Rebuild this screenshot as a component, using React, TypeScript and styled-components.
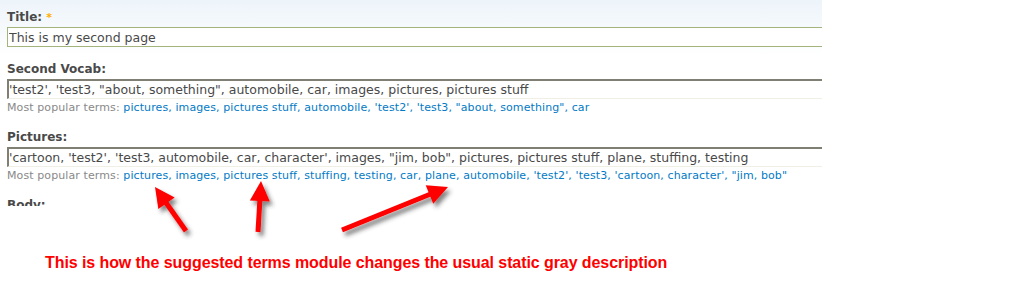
import React from 'react';
import styled, { createGlobalStyle } from 'styled-components';

const GlobalStyle = createGlobalStyle`
  body {
    margin: 0;
    background: #ffffff;
  }
`;

const LINK_COLOR = '#027ac6';
const TEXT_COLOR = '#494949';
const MUTED_COLOR = '#898989';

const vocabTerms = [
  'pictures',
  'images',
  'pictures stuff',
  'automobile',
  "'test2'",
  "'test3",
  '"about, something"',
  'car',
];

const pictureTerms = [
  'pictures',
  'images',
  'pictures stuff',
  'stuffing',
  'testing',
  'car',
  'plane',
  'automobile',
  "'test2'",
  "'test3",
  "'cartoon, character'",
  '"jim, bob"',
];

// arrows drawn over the form: tail x/y, tip x/y
const arrows = [
  { x1: 186, y1: 231, x2: 155, y2: 187 },
  { x1: 258, y1: 232, x2: 261, y2: 181 },
  { x1: 342, y1: 230, x2: 448, y2: 187 },
];

function Arrow({ x1, y1, x2, y2 }: { x1: number; y1: number; x2: number; y2: number }) {
  const dx = x2 - x1;
  const dy = y2 - y1;
  const len = Math.sqrt(dx * dx + dy * dy);
  const ux = dx / len;
  const uy = dy / len;
  const head = 20;
  const half = 10;
  const bx = x2 - ux * head;
  const by = y2 - uy * head;
  const points = [
    `${x2},${y2}`,
    `${bx - uy * half},${by + ux * half}`,
    `${bx + uy * half},${by - ux * half}`,
  ].join(' ');
  return (
    <g filter="url(#arrowShadow)">
      <line x1={x1} y1={y1} x2={bx + ux * 2} y2={by + uy * 2} stroke="#ff0000" strokeWidth={5} />
      <polygon points={points} fill="#ff0000" />
    </g>
  );
}

function TermList({ terms }: { terms: string[] }) {
  return (
    <>
      {terms.map((term, i) => (
        <React.Fragment key={term}>
          <TermLink href="#">{term}</TermLink>
          {i < terms.length - 1 && <Separator>, </Separator>}
        </React.Fragment>
      ))}
    </>
  );
}

export default function App() {
  return (
    <Page>
      <GlobalStyle />
      <FormPanel>
        <FormItem>
          <Label>
            Title: <Required>*</Required>
          </Label>
          <TitleInput readOnly value="This is my second page" />
        </FormItem>
        <FormItem>
          <Label>Second Vocab:</Label>
          <TagInput
            readOnly
            value={`'test2', 'test3, "about, something", automobile, car, images, pictures, pictures stuff`}
          />
          <Description>
            Most popular terms: <TermList terms={vocabTerms} />
          </Description>
        </FormItem>
        <FormItem>
          <Label>Pictures:</Label>
          <TagInput
            readOnly
            value={`'cartoon, 'test2', 'test3, automobile, car, character', images, "jim, bob", pictures, pictures stuff, plane, stuffing, testing`}
          />
          <Description>
            Most popular terms: <TermList terms={pictureTerms} />
          </Description>
        </FormItem>
        <FormItem>
          <Label>Body:</Label>
        </FormItem>
      </FormPanel>
      <Caption>This is how the suggested terms module changes the usual static gray description</Caption>
      <Overlay width={1026} height={292}>
        <defs>
          <filter id="arrowShadow" x="-50%" y="-50%" width="200%" height="200%">
            <feDropShadow dx="3" dy="4" stdDeviation="2" floodColor="#333" floodOpacity="0.6" />
          </filter>
        </defs>
        {arrows.map((a, i) => (
          <Arrow key={i} {...a} />
        ))}
      </Overlay>
    </Page>
  );
}

const Page = styled.div`
  position: relative;
  width: 1026px;
  height: 292px;
  overflow: hidden;
  font-family: 'DejaVu Sans', Verdana, sans-serif;
`;

const FormPanel = styled.div`
  width: 822px;
  height: 206px;
  overflow: hidden;
  box-sizing: border-box;
  padding: 10px 0 0 7px;
  background: linear-gradient(to bottom, #edf4fa 0px, #ffffff 55px);
`;

const FormItem = styled.div`
  margin-bottom: 15px;
`;

const Label = styled.label`
  display: block;
  font-size: 12px;
  line-height: 15px;
  font-weight: bold;
  color: ${TEXT_COLOR};
  margin-bottom: 2px;
`;

const Required = styled.span`
  color: #ffae00;
  font-size: 11px;
  vertical-align: top;
`;

const BaseInput = styled.input`
  display: block;
  box-sizing: border-box;
  width: 100%;
  height: 20px;
  margin: 0;
  font-family: 'DejaVu Sans', Verdana, sans-serif;
  font-size: 12.5px;
  color: ${TEXT_COLOR};
  background: #ffffff;
  outline: none;
`;

const TitleInput = styled(BaseInput)`
  border: 1px solid #a3b57c;
  border-right: none;
  padding: 0 0 0 1px;
`;

const TagInput = styled(BaseInput)`
  border-style: solid;
  border-color: #7f7f73 transparent #efefe6 #7f7f73;
  border-width: 2px 0 1px 2px;
  padding: 0 0 0 0;
`;

const Description = styled.div`
  font-size: 11px;
  letter-spacing: 0.1px;
  line-height: 14px;
  padding: 2px 0 0;
  margin-bottom: 2px;
  color: ${MUTED_COLOR};
  white-space: nowrap;
`;

const TermLink = styled.a`
  color: ${LINK_COLOR};
  text-decoration: none;
`;

const Separator = styled.span`
  color: ${LINK_COLOR};
`;

const Caption = styled.div`
  margin: 48px 0 0 45px;
  font-family: 'Liberation Sans', Arial, sans-serif;
  font-size: 16px;
  line-height: 18px;
  letter-spacing: -0.08px;
  font-weight: bold;
  color: #ff0000;
  white-space: nowrap;
`;

const Overlay = styled.svg`
  position: absolute;
  left: 0;
  top: 0;
  pointer-events: none;
`;
